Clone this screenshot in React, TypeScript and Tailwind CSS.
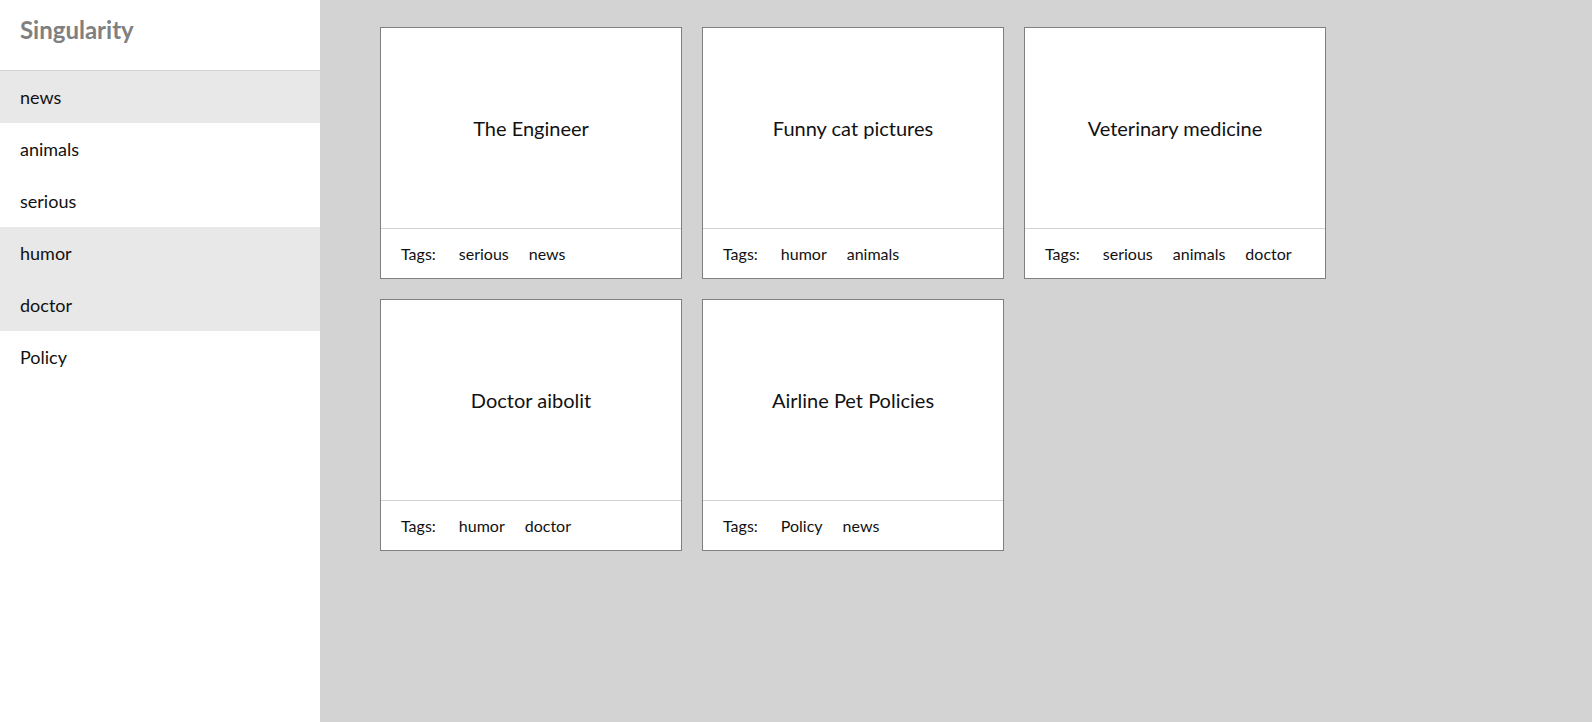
const TAGS = [
  { name: "news", active: true },
  { name: "animals", active: false },
  { name: "serious", active: false },
  { name: "humor", active: true },
  { name: "doctor", active: true },
  { name: "Policy", active: false },
];

const POSTS = [
  { title: "The Engineer", tags: ["serious", "news"] },
  { title: "Funny cat pictures", tags: ["humor", "animals"] },
  { title: "Veterinary medicine", tags: ["serious", "animals", "doctor"] },
  { title: "Doctor aibolit", tags: ["humor", "doctor"] },
  { title: "Airline Pet Policies", tags: ["Policy", "news"] },
];

function Card({ title, tags }: { title: string; tags: string[] }) {
  return (
    <div className="flex h-[252px] w-[302px] flex-col border border-[#808080] bg-white">
      <div className="flex flex-1 items-center justify-center border-b border-[#d3d3d3] text-[20px] text-[#111]">
        {title}
      </div>
      <div className="flex h-[49px] items-center gap-5 px-5 text-[16px] text-[#111]">
        <span className="mr-[3px]">Tags:</span>
        {tags.map((t) => (
          <span key={t}>{t}</span>
        ))}
      </div>
    </div>
  );
}

export default function App() {
  return (
    <div className="flex h-[722px] w-full bg-[#d3d3d3] font-['Lato',sans-serif]">
      <aside className="w-[320px] shrink-0 bg-white">
        <div className="h-[71px] border-b border-[#d3d3d3] px-5 pt-[18px]">
          <h1 className="text-[24px] font-bold leading-none text-[#808080]">Singularity</h1>
        </div>
        <ul>
          {TAGS.map((t) => (
            <li
              key={t.name}
              className={`flex h-[52px] items-center px-5 pt-[1px] text-[18px] text-[#111] ${t.active ? "bg-[#e8e8e8]" : ""}`}
            >
              {t.name}
            </li>
          ))}
        </ul>
      </aside>
      <main className="flex-1 pl-[60px] pt-[27px]">
        <div className="flex max-w-[966px] flex-wrap gap-5">
          {POSTS.map((p) => (
            <Card key={p.title} {...p} />
          ))}
        </div>
      </main>
    </div>
  );
}
